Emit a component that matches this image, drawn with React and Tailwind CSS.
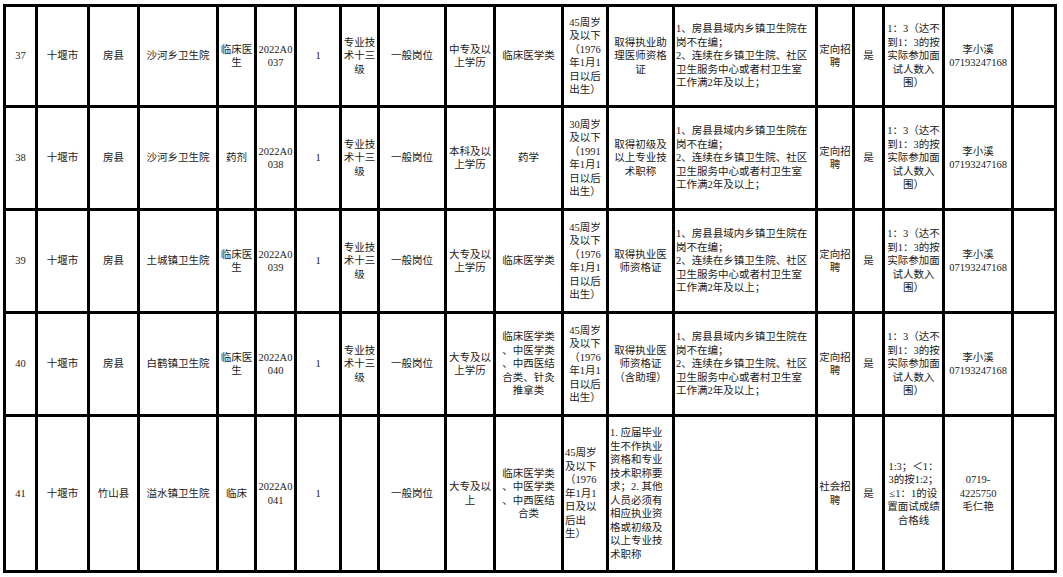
const rows = [
  {
    cells: [
      '37', '十堰市', '房县', '沙河乡卫生院', '临床医\n生', '2022A0\n037', '1', '专业技\n术十三\n级', '一般岗位', '中专及以\n上学历', '临床医学类',
      '45周岁\n及以下\n（1976\n年1月1\n日以后\n出生）', '取得执业助\n理医师资格\n证',
      { t: '1、房县县域内乡镇卫生院在\n岗不在编；\n2、连续在乡镇卫生院、社区\n卫生服务中心或者村卫生室\n工作满2年及以上；', left: true },
      '定向招\n聘', '是', '1：3（达不\n到1：3的按\n实际参加面\n试人数入\n围）', '李小溪\n07193247168', '',
    ],
  },
  {
    cells: [
      '38', '十堰市', '房县', '沙河乡卫生院', '药剂', '2022A0\n038', '1', '专业技\n术十三\n级', '一般岗位', '本科及以\n上学历', '药学',
      '30周岁\n及以下\n（1991\n年1月1\n日以后\n出生）', '取得初级及\n以上专业技\n术职称',
      { t: '1、房县县域内乡镇卫生院在\n岗不在编；\n2、连续在乡镇卫生院、社区\n卫生服务中心或者村卫生室\n工作满2年及以上；', left: true },
      '定向招\n聘', '是', '1：3（达不\n到1：3的按\n实际参加面\n试人数入\n围）', '李小溪\n07193247168', '',
    ],
  },
  {
    cells: [
      '39', '十堰市', '房县', '土城镇卫生院', '临床医\n生', '2022A0\n039', '1', '专业技\n术十三\n级', '一般岗位', '大专及以\n上学历', '临床医学类',
      '45周岁\n及以下\n（1976\n年1月1\n日以后\n出生）', '取得执业医\n师资格证',
      { t: '1、房县县域内乡镇卫生院在\n岗不在编；\n2、连续在乡镇卫生院、社区\n卫生服务中心或者村卫生室\n工作满2年及以上；', left: true },
      '定向招\n聘', '是', '1：3（达不\n到1：3的按\n实际参加面\n试人数入\n围）', '李小溪\n07193247168', '',
    ],
  },
  {
    cells: [
      '40', '十堰市', '房县', '白鹤镇卫生院', '临床医\n生', '2022A0\n040', '1', '专业技\n术十三\n级', '一般岗位', '大专及以\n上学历', '临床医学类\n、中医学类\n、中西医结\n合类、针灸\n推拿类',
      '45周岁\n及以下\n（1976\n年1月1\n日以后\n出生）', '取得执业医\n师资格证\n（含助理）',
      { t: '1、房县县域内乡镇卫生院在\n岗不在编；\n2、连续在乡镇卫生院、社区\n卫生服务中心或者村卫生室\n工作满2年及以上；', left: true },
      '定向招\n聘', '是', '1：3（达不\n到1：3的按\n实际参加面\n试人数入\n围）', '李小溪\n07193247168', '',
    ],
  },
  {
    cells: [
      '41', '十堰市', '竹山县', '溢水镇卫生院', '临床', '2022A0\n041', '1', '', '一般岗位', '大专及以\n上', '临床医学类\n、中医学类\n、中西医结\n合类',
      { t: '45周岁\n及以下\n（1976\n年1月1\n日及以\n后出\n生）', left: true },
      { t: '1. 应届毕业\n生不作执业\n资格和专业\n技术职称要\n求；2. 其他\n人员必须有\n相应执业资\n格或初级及\n以上专业技\n术职称', left: true },
      '', '社会招\n聘', '是', '1:3；＜1：\n3的按1:2；\n≤1：1的设\n置面试成绩\n合格线', '0719-\n4225750\n毛仁艳', '',
    ],
  },
];

export default function App() {
  return (
    <div className="w-[1063px] h-[577px] bg-white overflow-hidden pl-[3px] pt-[4px]">
      <div
        className="grid grid-cols-[29px_49px_47px_76px_35px_37px_42px_35px_64px_46px_65px_42px_63px_140px_34px_27px_57px_66px_40px] grid-rows-[98px_100px_100px_100px_153px] gap-[3px] p-[3px] bg-black w-fit text-[10.5px] leading-[13.5px] text-[#1a1a1a]"
        style={{ fontFamily: '"Liberation Serif", "Noto Sans CJK SC", serif' }}
      >
        {rows.map((row, ri) =>
          row.cells.map((c, ci) => {
            const cell = typeof c === 'string' ? { t: c } : c;
            return (
              <div
                key={ri + '-' + ci}
                className={
                  'bg-white flex items-center whitespace-pre-line ' +
                  (cell.left ? 'justify-start text-left pl-[1px]' : 'justify-center text-center')
                }
              >
                <span>{cell.t}</span>
              </div>
            );
          })
        )}
      </div>
    </div>
  );
}
